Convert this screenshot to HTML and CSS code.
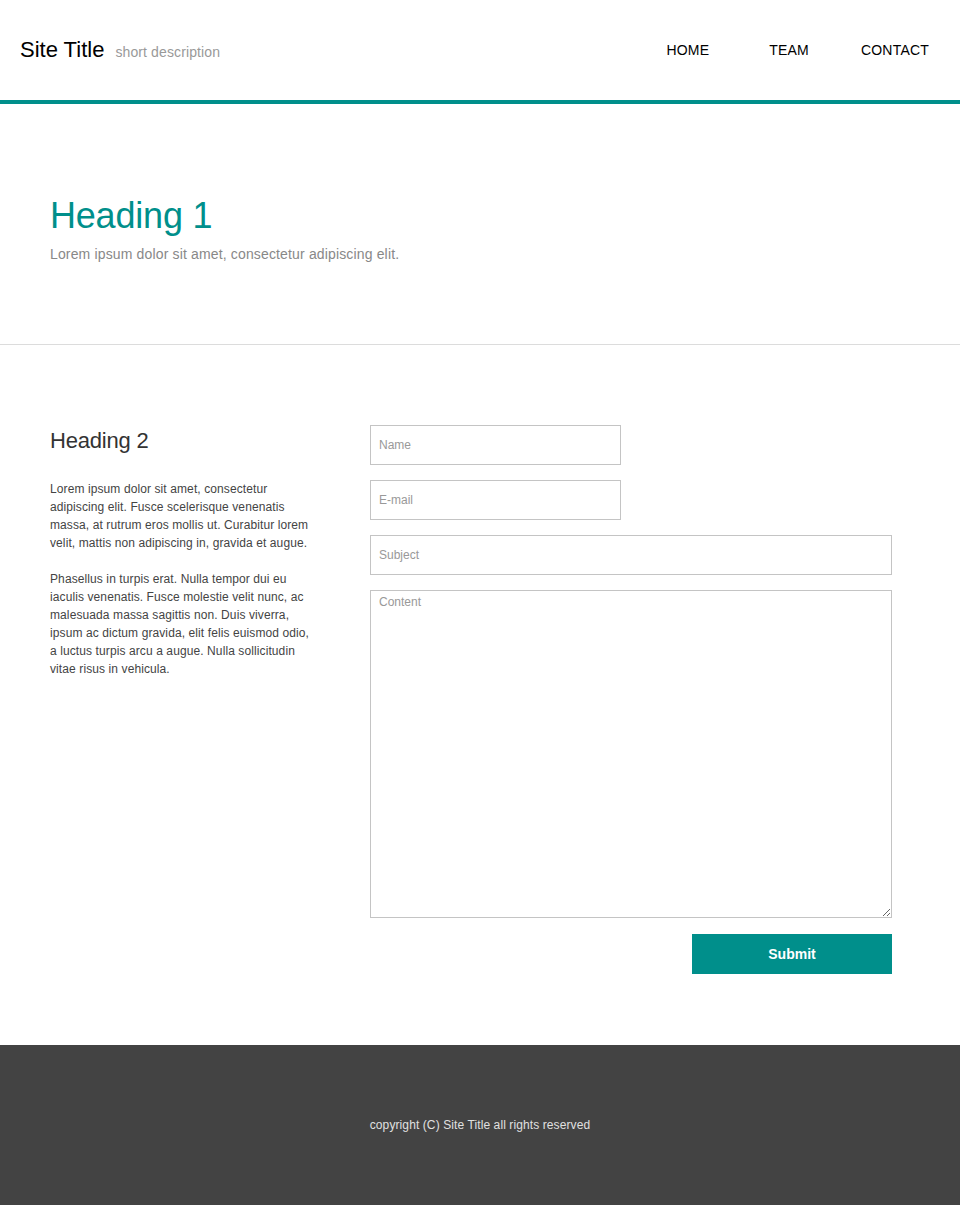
FILE: index.html
```html
<!DOCTYPE html>
<html lang="en">
<head>
<meta charset="utf-8">
<title>Site Title</title>
<link rel="stylesheet" href="styles.css">
</head>
<body>
<header class="site-header">
  <div class="brand">
    <span class="brand-title">Site Title</span>
    <span class="brand-desc">short description</span>
  </div>
  <nav class="nav">
    <a href="#" class="nav-link nav-link-home">HOME</a>
    <a href="#" class="nav-link">TEAM</a>
    <a href="#" class="nav-link">CONTACT</a>
  </nav>
</header>

<section class="hero">
  <h1 class="hero-title">Heading 1</h1>
  <p class="hero-lead">Lorem ipsum dolor sit amet, consectetur adipiscing elit.</p>
</section>

<main class="content">
  <div class="intro">
    <h2 class="intro-title">Heading 2</h2>
    <p class="intro-text">Lorem ipsum dolor sit amet, consectetur adipiscing elit. Fusce scelerisque venenatis massa, at rutrum eros mollis ut. Curabitur lorem velit, mattis non adipiscing in, gravida et augue.</p>
    <p class="intro-text">Phasellus in turpis erat. Nulla tempor dui eu iaculis venenatis. Fusce molestie velit nunc, ac malesuada massa sagittis non. Duis viverra, ipsum ac dictum gravida, elit felis euismod odio, a luctus turpis arcu a augue. Nulla sollicitudin vitae risus in vehicula.</p>
  </div>
  <form class="contact-form">
    <input class="field field-half" type="text" placeholder="Name">
    <input class="field field-half" type="text" placeholder="E-mail">
    <input class="field" type="text" placeholder="Subject">
    <textarea class="field field-area" placeholder="Content"></textarea>
    <button class="submit" type="button">Submit</button>
  </form>
</main>

<footer class="site-footer">
  <p class="copyright">copyright (C) Site Title all rights reserved</p>
</footer>
</body>
</html>
```

FILE: styles.css
```css
* { box-sizing: border-box; }

body {
  margin: 0;
  font-family: "Liberation Sans", Arial, sans-serif;
  color: #444;
  background: #fff;
}

.site-header {
  height: 104px;
  display: flex;
  align-items: center;
  justify-content: space-between;
  padding: 0 31px 0 20px;
  border-bottom: 4px solid #008f8b;
}

.brand {
  display: flex;
  align-items: baseline;
  gap: 11px;
}

.brand-title {
  font-size: 22px;
  color: #000;
}

.brand-desc {
  font-size: 14px;
  letter-spacing: 0.12px;
  color: #999;
}

.nav {
  display: flex;
  gap: 52px;
}

.nav-link {
  font-size: 14px;
  letter-spacing: 0.2px;
  color: #000;
  text-decoration: none;
}

.nav-link-home {
  margin-right: 8px;
}

.hero {
  height: 241px;
  padding: 94px 50px 0;
  border-bottom: 1px solid #dcdcdc;
}

.hero-title {
  margin: 0;
  font-size: 36px;
  line-height: 36px;
  font-weight: normal;
  letter-spacing: -0.2px;
  color: #008f8b;
}

.hero-lead {
  margin: 10px 0 0;
  font-size: 14px;
  line-height: 20px;
  letter-spacing: 0.15px;
  color: #888;
}

.content {
  display: grid;
  grid-template-columns: 266px 522px;
  column-gap: 54px;
  padding: 80px 50px 71px;
  align-items: start;
}

.intro-title {
  margin: 5px 0 0;
  font-size: 22px;
  line-height: 22px;
  font-weight: normal;
  letter-spacing: -0.2px;
  color: #333;
}

.intro-text {
  margin: 28px 0 0;
  font-size: 12px;
  line-height: 18px;
  letter-spacing: 0.1px;
  color: #444;
}

.intro-text + .intro-text {
  margin-top: 18px;
}

.contact-form {
  display: flex;
  flex-direction: column;
  gap: 15px;
}

.field {
  display: block;
  width: 522px;
  height: 40px;
  margin: 0;
  padding: 0 8px;
  border: 1px solid #c4c4c4;
  border-radius: 0;
  font-family: "Liberation Sans", Arial, sans-serif;
  font-size: 12px;
  color: #444;
  background: #fff;
  outline: none;
}

.field::placeholder {
  color: #999;
}

.field-half {
  width: 251px;
}

.field-area {
  height: 328px;
  padding: 4px 8px;
  resize: vertical;
}

.submit {
  align-self: flex-end;
  width: 200px;
  height: 40px;
  margin-top: 1px;
  border: none;
  border-radius: 0;
  background: #008f8b;
  color: #fff;
  font-family: "Liberation Sans", Arial, sans-serif;
  font-size: 14px;
  font-weight: bold;
  cursor: pointer;
}

.site-footer {
  height: 160px;
  display: flex;
  align-items: center;
  justify-content: center;
  background: #434343;
}

.copyright {
  margin: 0;
  font-size: 12px;
  letter-spacing: 0.1px;
  color: #e0e0e0;
}
```
